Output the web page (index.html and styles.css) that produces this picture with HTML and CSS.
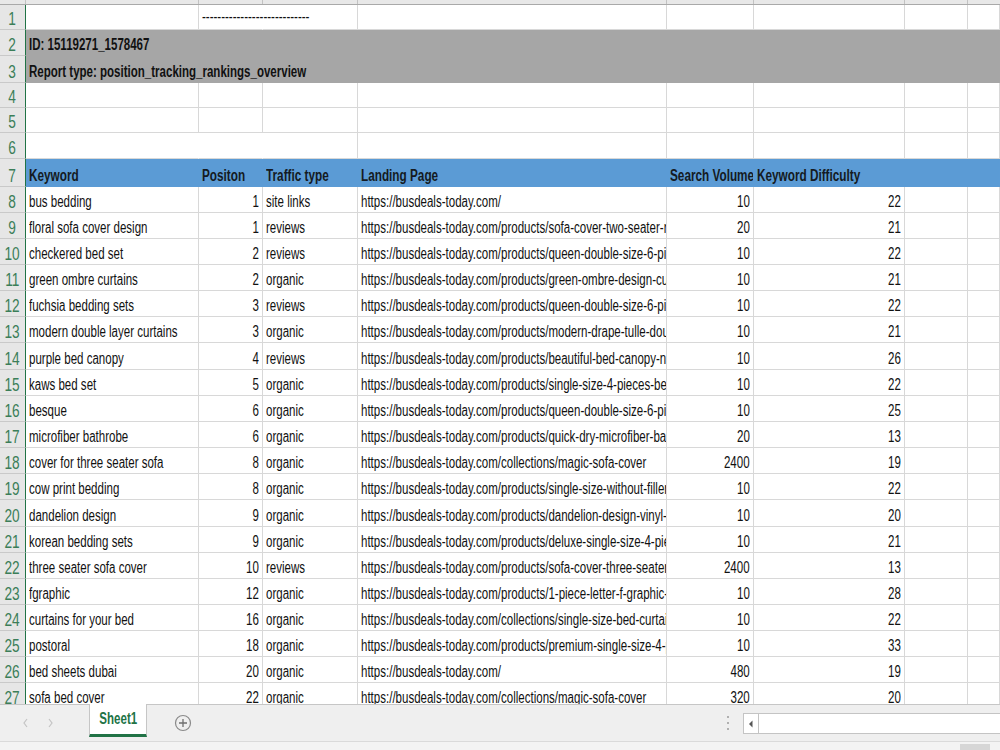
FILE: index.html
```html
<!DOCTYPE html>
<html>
<head>
<meta charset="utf-8">
<link rel="stylesheet" href="styles.css">
</head>
<body>
<div class="app">
  <div class="colhead">
    <div class="ch"></div><div class="ch"></div><div class="ch"></div><div class="ch"></div><div class="ch"></div><div class="ch"></div><div class="ch"></div><div class="ch"></div><div class="ch last"></div>
  </div>
  <div class="viewport">
    <div class="sheet">
      <!-- row 1 -->
      <div class="rh"><span>1</span></div><div class="c"></div><div class="c nb ov"><span class="t">----------------------------</span></div><div class="c"></div><div class="c"></div><div class="c"></div><div class="c"></div><div class="c"></div><div class="c"></div>
      <!-- row 2 -->
      <div class="rh"><span>2</span></div><div class="c gray b"><span class="t">ID: 15119271_1578467</span></div>
      <!-- row 3 -->
      <div class="rh"><span>3</span></div><div class="c gray b"><span class="t">Report type: position_tracking_rankings_overview</span></div>
      <!-- row 4 -->
      <div class="rh"><span>4</span></div><div class="c"></div><div class="c"></div><div class="c"></div><div class="c"></div><div class="c"></div><div class="c"></div><div class="c"></div><div class="c"></div>
      <!-- row 5 -->
      <div class="rh"><span>5</span></div><div class="c"></div><div class="c"></div><div class="c"></div><div class="c"></div><div class="c"></div><div class="c"></div><div class="c"></div><div class="c"></div>
      <!-- row 6 -->
      <div class="rh"><span>6</span></div><div class="c nb"></div><div class="c nb"></div><div class="c"></div><div class="c"></div><div class="c"></div><div class="c"></div><div class="c"></div><div class="c"></div>
      <!-- row 7 -->
      <div class="rh"><span>7</span></div><div class="c hd"><span class="t">Keyword</span></div><div class="c hd"><span class="t">Positon</span></div><div class="c hd"><span class="t">Traffic type</span></div><div class="c hd"><span class="t">Landing Page</span></div><div class="c hd"><span class="t">Search Volume</span></div><div class="c hd"><span class="t">Keyword Difficulty</span></div><div class="c hd"></div><div class="c hd"></div>
      <!-- data -->
      <div class="rh"><span>8</span></div><div class="c"><span class="t">bus bedding</span></div><div class="c n"><span class="t">1</span></div><div class="c"><span class="t">site links</span></div><div class="c"><span class="t">https://busdeals-today.com/</span></div><div class="c n"><span class="t">10</span></div><div class="c n"><span class="t">22</span></div><div class="c"></div><div class="c"></div>
      <div class="rh"><span>9</span></div><div class="c"><span class="t">floral sofa cover design</span></div><div class="c n"><span class="t">1</span></div><div class="c"><span class="t">reviews</span></div><div class="c"><span class="t">https://busdeals-today.com/products/sofa-cover-two-seater-removable</span></div><div class="c n"><span class="t">20</span></div><div class="c n"><span class="t">21</span></div><div class="c"></div><div class="c"></div>
      <div class="rh"><span>10</span></div><div class="c"><span class="t">checkered bed set</span></div><div class="c n"><span class="t">2</span></div><div class="c"><span class="t">reviews</span></div><div class="c"><span class="t">https://busdeals-today.com/products/queen-double-size-6-pieces</span></div><div class="c n"><span class="t">10</span></div><div class="c n"><span class="t">22</span></div><div class="c"></div><div class="c"></div>
      <div class="rh"><span>11</span></div><div class="c"><span class="t">green ombre curtains</span></div><div class="c n"><span class="t">2</span></div><div class="c"><span class="t">organic</span></div><div class="c"><span class="t">https://busdeals-today.com/products/green-ombre-design-curtains</span></div><div class="c n"><span class="t">10</span></div><div class="c n"><span class="t">21</span></div><div class="c"></div><div class="c"></div>
      <div class="rh"><span>12</span></div><div class="c"><span class="t">fuchsia bedding sets</span></div><div class="c n"><span class="t">3</span></div><div class="c"><span class="t">reviews</span></div><div class="c"><span class="t">https://busdeals-today.com/products/queen-double-size-6-pieces</span></div><div class="c n"><span class="t">10</span></div><div class="c n"><span class="t">22</span></div><div class="c"></div><div class="c"></div>
      <div class="rh"><span>13</span></div><div class="c"><span class="t">modern double layer curtains</span></div><div class="c n"><span class="t">3</span></div><div class="c"><span class="t">organic</span></div><div class="c"><span class="t">https://busdeals-today.com/products/modern-drape-tulle-double-layer</span></div><div class="c n"><span class="t">10</span></div><div class="c n"><span class="t">21</span></div><div class="c"></div><div class="c"></div>
      <div class="rh"><span>14</span></div><div class="c"><span class="t">purple bed canopy</span></div><div class="c n"><span class="t">4</span></div><div class="c"><span class="t">reviews</span></div><div class="c"><span class="t">https://busdeals-today.com/products/beautiful-bed-canopy-net</span></div><div class="c n"><span class="t">10</span></div><div class="c n"><span class="t">26</span></div><div class="c"></div><div class="c"></div>
      <div class="rh"><span>15</span></div><div class="c"><span class="t">kaws bed set</span></div><div class="c n"><span class="t">5</span></div><div class="c"><span class="t">organic</span></div><div class="c"><span class="t">https://busdeals-today.com/products/single-size-4-pieces-bedding</span></div><div class="c n"><span class="t">10</span></div><div class="c n"><span class="t">22</span></div><div class="c"></div><div class="c"></div>
      <div class="rh"><span>16</span></div><div class="c"><span class="t">besque</span></div><div class="c n"><span class="t">6</span></div><div class="c"><span class="t">organic</span></div><div class="c"><span class="t">https://busdeals-today.com/products/queen-double-size-6-pieces</span></div><div class="c n"><span class="t">10</span></div><div class="c n"><span class="t">25</span></div><div class="c"></div><div class="c"></div>
      <div class="rh"><span>17</span></div><div class="c"><span class="t">microfiber bathrobe</span></div><div class="c n"><span class="t">6</span></div><div class="c"><span class="t">organic</span></div><div class="c"><span class="t">https://busdeals-today.com/products/quick-dry-microfiber-bathrobe</span></div><div class="c n"><span class="t">20</span></div><div class="c n"><span class="t">13</span></div><div class="c"></div><div class="c"></div>
      <div class="rh"><span>18</span></div><div class="c"><span class="t">cover for three seater sofa</span></div><div class="c n"><span class="t">8</span></div><div class="c"><span class="t">organic</span></div><div class="c"><span class="t">https://busdeals-today.com/collections/magic-sofa-cover</span></div><div class="c n"><span class="t">2400</span></div><div class="c n"><span class="t">19</span></div><div class="c"></div><div class="c"></div>
      <div class="rh"><span>19</span></div><div class="c"><span class="t">cow print bedding</span></div><div class="c n"><span class="t">8</span></div><div class="c"><span class="t">organic</span></div><div class="c"><span class="t">https://busdeals-today.com/products/single-size-without-filler</span></div><div class="c n"><span class="t">10</span></div><div class="c n"><span class="t">22</span></div><div class="c"></div><div class="c"></div>
      <div class="rh"><span>20</span></div><div class="c"><span class="t">dandelion design</span></div><div class="c n"><span class="t">9</span></div><div class="c"><span class="t">organic</span></div><div class="c"><span class="t">https://busdeals-today.com/products/dandelion-design-vinyl-sticker</span></div><div class="c n"><span class="t">10</span></div><div class="c n"><span class="t">20</span></div><div class="c"></div><div class="c"></div>
      <div class="rh"><span>21</span></div><div class="c"><span class="t">korean bedding sets</span></div><div class="c n"><span class="t">9</span></div><div class="c"><span class="t">organic</span></div><div class="c"><span class="t">https://busdeals-today.com/products/deluxe-single-size-4-pieces</span></div><div class="c n"><span class="t">10</span></div><div class="c n"><span class="t">21</span></div><div class="c"></div><div class="c"></div>
      <div class="rh"><span>22</span></div><div class="c"><span class="t">three seater sofa cover</span></div><div class="c n"><span class="t">10</span></div><div class="c"><span class="t">reviews</span></div><div class="c"><span class="t">https://busdeals-today.com/products/sofa-cover-three-seater</span></div><div class="c n"><span class="t">2400</span></div><div class="c n"><span class="t">13</span></div><div class="c"></div><div class="c"></div>
      <div class="rh"><span>23</span></div><div class="c"><span class="t">fgraphic</span></div><div class="c n"><span class="t">12</span></div><div class="c"><span class="t">organic</span></div><div class="c"><span class="t">https://busdeals-today.com/products/1-piece-letter-f-graphic-sticker</span></div><div class="c n"><span class="t">10</span></div><div class="c n"><span class="t">28</span></div><div class="c"></div><div class="c"></div>
      <div class="rh"><span>24</span></div><div class="c"><span class="t">curtains for your bed</span></div><div class="c n"><span class="t">16</span></div><div class="c"><span class="t">organic</span></div><div class="c"><span class="t">https://busdeals-today.com/collections/single-size-bed-curtains</span></div><div class="c n"><span class="t">10</span></div><div class="c n"><span class="t">22</span></div><div class="c"></div><div class="c"></div>
      <div class="rh"><span>25</span></div><div class="c"><span class="t">postoral</span></div><div class="c n"><span class="t">18</span></div><div class="c"><span class="t">organic</span></div><div class="c"><span class="t">https://busdeals-today.com/products/premium-single-size-4-pieces</span></div><div class="c n"><span class="t">10</span></div><div class="c n"><span class="t">33</span></div><div class="c"></div><div class="c"></div>
      <div class="rh"><span>26</span></div><div class="c"><span class="t">bed sheets dubai</span></div><div class="c n"><span class="t">20</span></div><div class="c"><span class="t">organic</span></div><div class="c"><span class="t">https://busdeals-today.com/</span></div><div class="c n"><span class="t">480</span></div><div class="c n"><span class="t">19</span></div><div class="c"></div><div class="c"></div>
      <div class="rh"><span>27</span></div><div class="c"><span class="t">sofa bed cover</span></div><div class="c n"><span class="t">22</span></div><div class="c"><span class="t">organic</span></div><div class="c"><span class="t">https://busdeals-today.com/collections/magic-sofa-cover</span></div><div class="c n"><span class="t">320</span></div><div class="c n"><span class="t">20</span></div><div class="c"></div><div class="c"></div>
    </div>
  </div>
  <div class="tabbar">
    <div class="navs">
      <svg width="8" height="10" viewBox="0 0 8 10"><path d="M5 1 L2 5 L5 9" fill="none" stroke="#c4c4c4" stroke-width="1.2"/></svg>
      <svg width="8" height="10" viewBox="0 0 8 10"><path d="M3 1 L6 5 L3 9" fill="none" stroke="#c4c4c4" stroke-width="1.2"/></svg>
    </div>
    <div class="tab"><span class="tt">Sheet1</span></div>
    <div class="addsheet">
      <svg width="18" height="18" viewBox="0 0 18 18"><circle cx="9" cy="9" r="7.5" fill="none" stroke="#8a8a8a" stroke-width="1.2"/><path d="M9 5 V13 M5 9 H13" stroke="#6f6f6f" stroke-width="1.3"/></svg>
    </div>
    <div class="spacer"></div>
    <div class="dots"><span></span><span></span><span></span></div>
    <div class="hscroll">
      <div class="sbtn"><svg width="6" height="8" viewBox="0 0 6 8"><path d="M4.5 0.5 L1 4 L4.5 7.5 Z" fill="#555"/></svg></div>
    </div>
  </div>
  <div class="status"><div class="sicon"></div></div>
</div>
</body>
</html>
```

FILE: styles.css
```css
html, body {
  margin: 0;
  padding: 0;
  background: #ffffff;
  overflow: hidden;
}
body {
  font-family: "Liberation Sans", Arial, sans-serif;
  color: #111;
}
.app {
  width: 1000px;
  height: 750px;
  display: flex;
  flex-direction: column;
}
.colhead {
  height: 5px;
  flex: none;
  display: grid;
  grid-template-columns: 26px 173px 64px 95px 309px 87px 151px 63px 32px;
  background: #e8e8e8;
  border-bottom: 1px solid #a9a9a9;
  box-sizing: border-box;
}
.ch {
  border-right: 1px solid #c2c2c2;
}
.ch.last {
  border-right: none;
}
.viewport {
  height: 699px;
  flex: none;
  overflow: hidden;
}
.sheet {
  display: grid;
  grid-template-columns: 26px 173px 64px 95px 309px 87px 151px 63px 32px;
  grid-template-rows: 25px 26px 27px 25px 25px 26px 28px repeat(6, 26px) 27px repeat(5, 26px) 27px repeat(7, 26px);
  font-size: 16px;
}
.rh {
  background: #e6e6e6;
  border-right: 1px solid #217346;
  border-bottom: 1px solid #c9c9c9;
  box-sizing: border-box;
  color: #3b7e58;
  font-size: 18px;
  display: flex;
  align-items: flex-end;
  justify-content: center;
  padding-bottom: 1px;
  line-height: 18px;
}
.rh span {
  display: inline-block;
  transform: scaleX(0.76);
  transform-origin: center bottom;
}
.c {
  box-sizing: border-box;
  border-right: 1px solid #d8d8d8;
  border-bottom: 1px solid #d8d8d8;
  padding: 0 3px 1px 3px;
  white-space: nowrap;
  overflow: hidden;
  display: flex;
  align-items: flex-end;
  line-height: 18px;
  min-width: 0;
}
.t {
  display: inline-block;
  transform: scaleX(0.72);
  transform-origin: left bottom;
  flex: none;
}
.n {
  justify-content: flex-end;
}
.n .t {
  transform-origin: right bottom;
}
.nb {
  border-right-color: transparent;
}
.ov {
  overflow: visible;
  position: relative;
  z-index: 1;
  align-items: center;
  padding-bottom: 0;
}
.gray {
  grid-column: 2 / -1;
  background: #a6a6a6;
  border-right: none;
  border-bottom-color: #a6a6a6;
}
.b {
  font-weight: bold;
}
.hd {
  background: #5b9bd5;
  border-right-color: #5b9bd5;
  border-bottom-color: #5b9bd5;
  font-weight: bold;
  color: #141a22;
}
.hd .t {
  transform: scaleX(0.735);
}
.tabbar {
  height: 37px;
  flex: none;
  background: #efefef;
  border-top: 1px solid #c6c6c6;
  box-sizing: border-box;
  display: flex;
  align-items: stretch;
}
.navs {
  width: 89px;
  display: flex;
  align-items: center;
  padding-left: 22px;
  gap: 16px;
  box-sizing: border-box;
}
.tab {
  width: 58px;
  margin-top: -1px;
  height: 33px;
  background: #ffffff;
  border-left: 1px solid #c6c6c6;
  border-right: 1px solid #c6c6c6;
  border-bottom: 3px solid #217346;
  box-sizing: border-box;
  display: flex;
  align-items: center;
  justify-content: center;
  color: #217346;
  font-weight: bold;
  font-size: 16px;
}
.tt {
  display: inline-block;
  transform: scaleX(0.72);
  flex: none;
}
.addsheet {
  margin-left: 27px;
  display: flex;
  align-items: center;
}
.spacer {
  flex: 1;
}
.dots {
  width: 15px;
  display: flex;
  flex-direction: column;
  align-items: center;
  justify-content: center;
  gap: 4px;
  margin-right: 8px;
}
.dots span {
  width: 2px;
  height: 2px;
  background: #b0b0b0;
  display: block;
}
.hscroll {
  width: 257px;
  height: 21px;
  margin-top: 8px;
  background: #ffffff;
  border: 1px solid #c4c4c4;
  border-right: none;
  box-sizing: border-box;
  display: flex;
}
.sbtn {
  width: 14px;
  border-right: 1px solid #c4c4c4;
  display: flex;
  align-items: center;
  justify-content: center;
}
.status {
  flex: 1;
  background: #f3f3f3;
  border-top: 1px solid #dadada;
  box-sizing: border-box;
  display: flex;
  justify-content: flex-end;
  padding-top: 2px;
  padding-right: 10px;
}
.sicon {
  width: 30px;
  height: 10px;
  background: #d6d6d6;
}
```
